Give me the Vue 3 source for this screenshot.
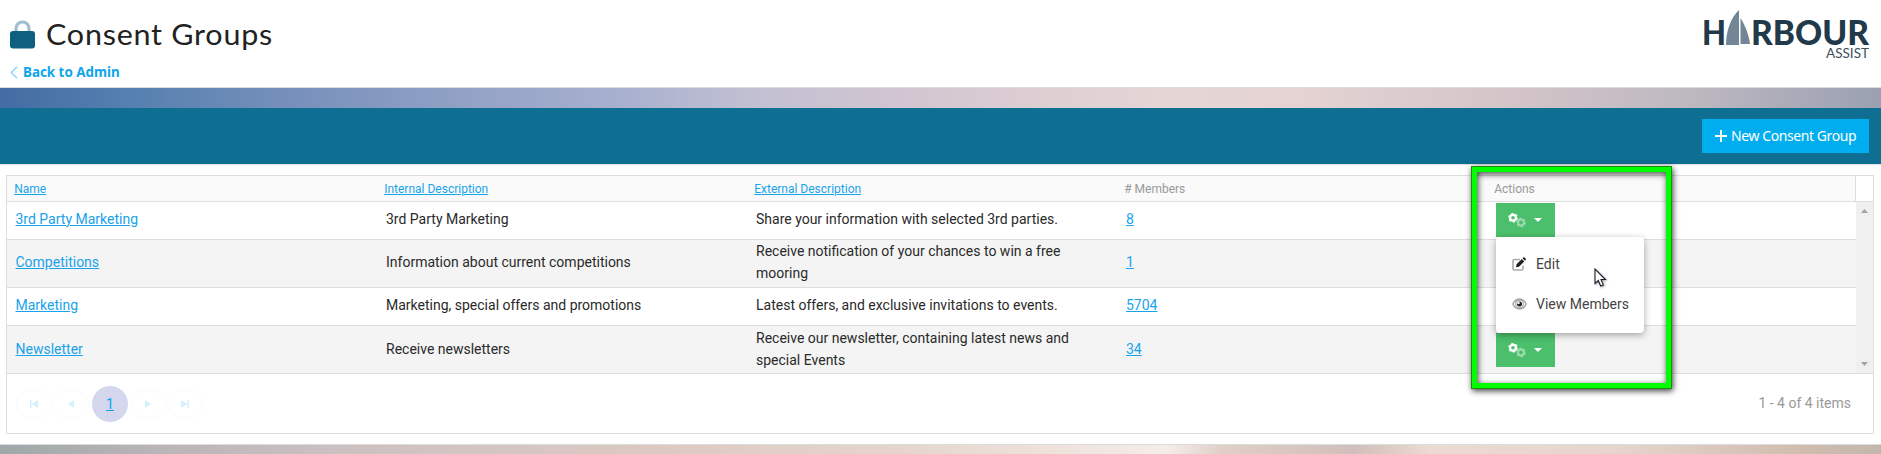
<script setup>
const headers = [
  { label: 'Name', link: true },
  { label: 'Internal Description', link: true },
  { label: 'External Description', link: true },
  { label: '# Members', link: false },
  { label: 'Actions', link: false },
]
const rows = [
  { name: '3rd Party Marketing', internal: '3rd Party Marketing', external: ['Share your information with selected 3rd parties.'], members: 8, menu: true },
  { name: 'Competitions', internal: 'Information about current competitions', external: ['Receive notification of your chances to win a free', 'mooring'], members: 1 },
  { name: 'Marketing', internal: 'Marketing, special offers and promotions', external: ['Latest offers, and exclusive invitations to events.'], members: 5704 },
  { name: 'Newsletter', internal: 'Receive newsletters', external: ['Receive our newsletter, containing latest news and', 'special Events'], members: 34 },
]
</script>

<template>
  <div class="page">
    <header class="top">
      <div class="heading">
        <div class="title-row">
          <svg class="lock" width="25" height="29" viewBox="0 0 25 29">
            <path d="M6 12V8.500a6.500 6.500 0 0 1 13 0V12" fill="none" stroke="#9fbfcd" stroke-width="3.200" />
            <rect x="0" y="11" width="25" height="17.500" rx="3" fill="#0f5f80" />
          </svg>
          <svg class="title" width="240" height="40" viewBox="0 0 240 40">
            <text x="-1" y="24.500" textLength="227" lengthAdjust="spacingAndGlyphs">Consent Groups</text>
          </svg>
        </div>
        <a class="back">
          <svg width="8" height="13" viewBox="0 0 8 13"><path d="M7 .8 1.300 6.500 7 12.200" fill="none" stroke="#99dcf8" stroke-width="1.700" /></svg>
          <span>Back to Admin</span>
        </a>
      </div>
      <svg class="logo" width="170" height="54" viewBox="0 0 170 54">
        <path d="M26 36C26 22 31 8 39 1V36Z" fill="#748695" />
        <path d="M40.500 9C45 16 49 26 50 35H40.500Z" fill="#748695" />
        <g class="logo-main">
          <text x="2" y="35.500" textLength="24" lengthAdjust="spacingAndGlyphs">H</text>
          <text x="51" y="35.500" textLength="118" lengthAdjust="spacingAndGlyphs">RBOUR</text>
        </g>
        <text class="logo-sub" x="126" y="49" textLength="43" lengthAdjust="spacingAndGlyphs">ASSIST</text>
      </svg>
    </header>

    <div class="sky"></div>

    <div class="toolbar">
      <button class="new">
        <svg width="12" height="12" viewBox="0 0 12 12"><path d="M6 0V12M0 6H12" stroke="#fff" stroke-width="1.800" /></svg>
        <span>New Consent Group</span>
      </button>
    </div>

    <main class="panel">
      <div class="grid">
        <div class="thead">
          <div v-for="h in headers" :key="h.label" class="th"><span :class="{ link: h.link }">{{ h.label }}</span></div>
          <div class="gutter"></div>
        </div>
        <div class="body">
          <div class="rows">
            <div v-for="r in rows" :key="r.name" class="row" :class="{ tall: r.external.length > 1 }">
              <div class="td first"><span class="link">{{ r.name }}</span></div>
              <div class="td">{{ r.internal }}</div>
              <div class="td"><div><div v-for="l in r.external" :key="l" class="line">{{ l }}</div></div></div>
              <div class="td"><span class="link">{{ r.members }}</span></div>
              <div class="td act">
                <div class="gearbtn">
                  <svg width="18" height="15" viewBox="0 0 18 15">
                    <g fill="none" stroke="#fff">
                      <circle cx="5" cy="4.700" r="2.900" stroke-width="2.200" />
                      <circle cx="5" cy="4.700" r="4.200" stroke-width="1.300" stroke-dasharray="2.200 2.200" />
                      <g opacity=".45">
                        <circle cx="13" cy="9.500" r="2.900" stroke-width="2" />
                        <circle cx="13" cy="9.500" r="4.200" stroke-width="1.300" stroke-dasharray="2.200 2.200" />
                      </g>
                    </g>
                  </svg>
                  <svg width="8" height="4" viewBox="0 0 8 4"><path d="M0 0H8L4 4Z" fill="#fff" /></svg>
                </div>
                <div v-if="r.menu" class="menu">
                  <div class="item">
                    <svg width="15" height="14" viewBox="0 0 15 14">
                      <path d="M8 2.500H2.500Q1 2.500 1 4V11.500Q1 13 2.500 13H9.500Q11 13 11 11.500V8.500" fill="none" stroke="#aaa" stroke-width="1.600" />
                      <path d="M4 10.300 4.500 7.300 9.800 2 12.300 4.500 7 9.800ZM10.500 1.300 11.300.5Q12 0 12.600.6L13.700 1.700Q14.200 2.300 13.700 2.900L13 3.700Z" fill="#222" />
                    </svg>
                    <span>Edit</span>
                  </div>
                  <div class="item">
                    <svg width="15" height="12" viewBox="0 0 15 12">
                      <path d="M.8 6Q3.300 1 7.500 1T14.200 6Q11.700 11 7.500 11T.8 6Z" fill="#fff" stroke="#a8a8a8" stroke-width="1.600" />
                      <circle cx="7.500" cy="6" r="3.900" fill="none" stroke="#a8a8a8" stroke-width="1.200" />
                      <circle cx="7.500" cy="6" r="2.500" fill="#222" /><circle cx="6.500" cy="4.900" r="1.200" fill="#fff" />
                    </svg>
                    <span>View Members</span>
                  </div>
                </div>
              </div>
            </div>
          </div>
          <div class="scroll">
            <svg width="7" height="4" viewBox="0 0 7 4"><path d="M0 4H7L3.500 0Z" fill="#a3a3a3" /></svg>
            <svg width="7" height="4" viewBox="0 0 7 4"><path d="M0 0H7L3.500 4Z" fill="#a3a3a3" /></svg>
          </div>
        </div>
        <div class="pager">
          <div class="pages">
            <span class="pg"><svg width="8" height="8" viewBox="0 0 8 8"><path d="M0 0H1.500V8H0ZM8 0V8L1.500 4Z" fill="#d4f1fd" /></svg></span>
            <span class="pg"><svg width="6" height="8" viewBox="0 0 6 8"><path d="M6 0V8L0 4Z" fill="#d4f1fd" /></svg></span>
            <span class="cur"><span>1</span></span>
            <span class="pg"><svg width="6" height="8" viewBox="0 0 6 8"><path d="M0 0V8L6 4Z" fill="#d4f1fd" /></svg></span>
            <span class="pg"><svg width="8" height="8" viewBox="0 0 8 8"><path d="M6.500 0H8V8H6.500ZM0 0V8L6.500 4Z" fill="#d4f1fd" /></svg></span>
          </div>
          <span class="count">1 - 4 of 4 items</span>
        </div>
      </div>
    </main>
    <div class="clouds"></div>

    <div class="highlight"></div>
    <svg class="cursor" width="13" height="20" viewBox="0 0 13 20">
      <path d="M1 1V15.500L4.300 12.500 6.700 18 9.300 16.900 7 11.500H11.400Z" fill="#fff" stroke="#1c1c2c" stroke-width="1.100" />
    </svg>
  </div>
</template>

<style>
body { margin: 0; overflow: hidden; }
</style>

<style scoped>
* { box-sizing: border-box; }
.page { position: relative; width: 1881px; height: 454px; overflow: hidden; background: #fff; font-family: Roboto, "Liberation Sans", sans-serif; font-size: 14px; color: #2a2a2a; }
.top { height: 88px; border-bottom: 1px solid #dcdcdc; display: flex; justify-content: space-between; padding: 0 11px 0 10px; }
.title-row { display: flex; align-items: flex-start; height: 62px; padding-top: 20px; gap: 12px; }
.title { overflow: visible; font: 400 28px Lato, sans-serif; letter-spacing: .7px; fill: #222; }
.back { display: flex; align-items: center; gap: 5px; height: 20px; font: 700 13.400px/20px "Noto Sans", sans-serif; color: #0ea5ea; }
.logo { margin-top: 9px; overflow: visible; }
.logo-main { font: 900 34.500px Lato, sans-serif; fill: #22394a; }
.logo-sub { font: 400 13.500px Lato, sans-serif; fill: #3c5060; }
.sky { height: 20px; background: linear-gradient(90deg, #446ca3 0, #5580b0 7%, #758fba 15%, #93a2c6 25%, #a8b0cf 33%, #c1c0d2 40%, #d0c4d1 47%, #decfd2 56%, #e5d5d5 62%, #e4d3d2 69%, #d6c6ca 79%, #bdb8c0 90%, #9aa0b2 100%); }
.toolbar { height: 56px; background: #0f6f93; display: flex; justify-content: flex-end; padding: 11px 12px 0 0; }
.new { width: 167px; height: 34px; border: 0; padding: 0 0 0 13px; display: flex; align-items: center; gap: 4px; background: #00adef; color: #fff; font: 400 14px/20px "Noto Sans", sans-serif; letter-spacing: -.42px; white-space: nowrap; }
.panel { height: 281px; border-top: 1px solid #e0e0e0; border-bottom: 1px solid #dcdcdc; padding: 10px 7px 0 6px; }
.grid { height: 259px; border: 1px solid #dedede; }
.thead { height: 26px; display: grid; grid-template-columns: repeat(4, 370px) 1fr 18px; background: #fafafa; border-bottom: 1px solid #dedede; }
.th { padding-left: 7.200px; font-size: 12px; line-height: 27px; height: 25px; color: #999; }
.gutter { background: #fff; border-left: 1px solid #dedede; }
.link { color: #18a3ea; text-decoration: underline; }
.body { display: flex; height: 172px; }
.rows { flex: 1; }
.row { display: grid; grid-template-columns: repeat(4, 370px) 1fr; height: 38px; border-bottom: 1px solid #dedede; }
.row.tall { height: 48px; background: #f4f4f4; }
.td { display: flex; align-items: center; padding: 0 0 4px 9px; white-space: nowrap; }
.row.tall .td { padding-bottom: 3px; }
.row.tall:last-child .td { padding-bottom: 1px; }
.td.first { padding-left: 8.500px; }
.line { line-height: 22px; }
.td.act, .row.tall .td.act { position: relative; align-items: flex-start; padding: 1px 0 0 9px; }
.row.tall .td.act { padding-top: 7px; }
.gearbtn { width: 59px; height: 34px; background: #4bbf6b; display: flex; align-items: center; gap: 8px; padding-left: 12px; }
.menu { position: absolute; z-index: 3; left: 9px; top: 35px; width: 148px; height: 96px; background: #fff; border-radius: 4px; box-shadow: 0 2px 7px rgba(0,0,0,.35); padding-top: 7px; }
.item { height: 40px; display: flex; align-items: center; gap: 9px; padding-left: 16px; color: #444; }
.scroll { width: 17px; background: #f0f0f0; border-bottom: 1px solid #dedede; display: flex; flex-direction: column; align-items: center; justify-content: space-between; padding: 7px 0; }
.pager { height: 59px; display: flex; align-items: center; justify-content: space-between; padding: 0 22px 0 9px; }
.pages { display: flex; align-items: center; gap: 1px; }
.pg { width: 36px; height: 28px; border: 1px solid #fbfbfb; border-radius: 14px; display: flex; align-items: center; justify-content: center; }
.cur { width: 36px; height: 36px; margin: 0 1px 0 2px; border-radius: 50%; background: #d5d7ee; display: flex; align-items: center; justify-content: center; color: #0aa4ec; text-decoration: underline; }
.count { color: #999; padding-bottom: 2px; }
.clouds { height: 9px; background: linear-gradient(90deg, #9fa8a9 0, #b9b4b7 8%, #cabfc1 17%, #d3c4c2 24%, #dcc9c2 35%, #e6d5cf 48%, #eee2db 56%, #f5ede8 62%, #e0cfc8 65%, #d1bfbb 72%, #ebdbd2 76%, #e6d5cd 86%, #cfbcae 96%, #c3b7ad 100%); }
.highlight { position: absolute; z-index: 4; left: 1471px; top: 166px; width: 201px; height: 223px; border: 6px solid #0f0; outline: 1px solid #1d8a10; outline-offset: -1px; box-shadow: 1px 2px 6px rgba(0,0,0,.75), inset 1px 2px 6px rgba(0,0,0,.75); }
.cursor { position: absolute; z-index: 5; left: 1594px; top: 268px; filter: drop-shadow(1px 1px 1px rgba(0,0,0,.35)); }
</style>
